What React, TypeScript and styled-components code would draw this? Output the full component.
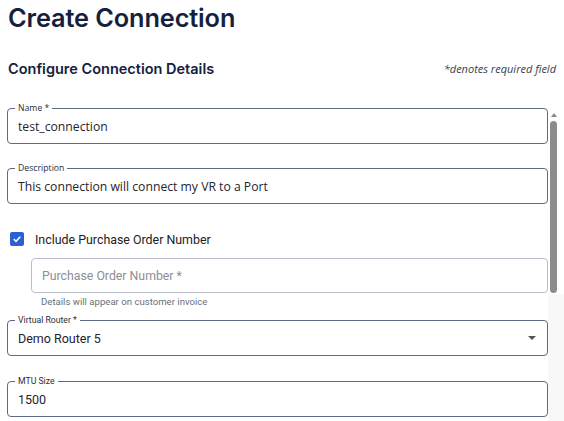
import styled, { createGlobalStyle } from 'styled-components';

const GlobalStyle = createGlobalStyle`
  html, body {
    margin: 0;
    padding: 0;
    background: #ffffff;
  }
  body {
    font-family: Roboto, "Liberation Sans", sans-serif;
    color: #222;
  }
`;

const Page = styled.div`
  width: 564px;
  height: 421px;
  overflow: hidden;
  display: flex;
  flex-direction: column;
`;

const Header = styled.div`
  padding: 0 8px 0 8px;
`;

const Title = styled.h1`
  margin: 0;
  padding-top: 1px;
  font-family: Inter, "Noto Sans", sans-serif;
  font-weight: 600;
  font-size: 25.3px;
  line-height: 34px;
  color: #14213d;
  letter-spacing: -0.1px;
`;

const SubRow = styled.div`
  display: flex;
  align-items: center;
  justify-content: space-between;
  margin-top: 23px;
  height: 20px;
`;

const SubTitle = styled.h2`
  margin: 0;
  font-family: Inter, "Noto Sans", sans-serif;
  font-weight: 600;
  font-size: 14.5px;
  color: #14213d;
`;

const RequiredNote = styled.span`
  font-family: "Open Sans", sans-serif;
  font-style: italic;
  font-size: 11px;
  color: #3a3f4a;
`;

const Body = styled.div`
  display: flex;
  flex: 1;
  margin-top: 25px;
`;

const Form = styled.div`
  width: 541px;
  padding-left: 7px;
  display: flex;
  flex-direction: column;
`;

const Fieldset = styled.fieldset<{ $top: number }>`
  margin: ${(p) => p.$top}px 0 0 0;
  padding: 0 10px 5px 10px;
  border: 1px solid #5b6b82;
  border-radius: 4px;
  min-width: 0;
`;

const Legend = styled.legend<{ $font?: string }>`
  padding: 0 3px;
  margin-left: -3px;
  font-family: ${(p) => p.$font ?? 'Roboto, sans-serif'};
  font-size: 8.7px;
  line-height: 11px;
  color: #2a2f38;
`;

const Value = styled.div<{ $font?: string; $size?: number }>`
  display: flex;
  align-items: center;
  justify-content: space-between;
  height: 24px;
  font-family: ${(p) => p.$font ?? 'Roboto, sans-serif'};
  font-size: ${(p) => p.$size ?? 12.5}px;
  color: #1f2430;
`;

const CheckRow = styled.label`
  display: flex;
  align-items: center;
  gap: 11px;
  margin-top: 27px;
  padding-left: 3px;
  height: 16px;
  font-family: Roboto, sans-serif;
  font-size: 12.4px;
  color: #222;
`;

const CheckBox = styled.span`
  width: 14px;
  height: 14px;
  border-radius: 2px;
  background: #2c5fd4;
  display: flex;
  align-items: center;
  justify-content: center;
`;

const Nested = styled.div`
  margin-left: 24px;
  margin-top: 11px;
  display: flex;
  flex-direction: column;
`;

const PlainBox = styled.div`
  height: 33px;
  border: 1px solid #b9c0cb;
  border-radius: 4px;
  display: flex;
  align-items: center;
  padding-left: 10px;
  font-family: Roboto, sans-serif;
  font-size: 12.3px;
  color: #8a8f98;
`;

const Helper = styled.div`
  margin-top: 3px;
  padding-left: 10px;
  font-family: Roboto, sans-serif;
  font-size: 9.6px;
  line-height: 12px;
  color: #6b7079;
`;

const Caret = styled.span`
  width: 0;
  height: 0;
  margin-right: 1px;
  border-left: 4px solid transparent;
  border-right: 4px solid transparent;
  border-top: 4px solid #555;
`;

const Scrollbar = styled.div`
  width: 16px;
  margin-left: 0;
  display: flex;
  flex-direction: column;
  align-items: center;
  background: linear-gradient(#ffffff 0, #ffffff 191px, #f8f8f8 191px);
  padding-top: 10px;
`;

const ArrowUp = styled.span`
  width: 0;
  height: 0;
  margin-right: 5px;
  border-left: 3px solid transparent;
  border-right: 3px solid transparent;
  border-bottom: 4px solid #8a8a8a;
`;

const Thumb = styled.div`
  width: 7px;
  height: 172px;
  margin-top: 4px;
  margin-right: 5px;
  border-radius: 4px;
  background: #8c8c8c;
`;

const App = () => {
  return (
    <Page>
      <GlobalStyle />
      <Header>
        <Title>Create Connection</Title>
        <SubRow>
          <SubTitle>Configure Connection Details</SubTitle>
          <RequiredNote>*denotes required field</RequiredNote>
        </SubRow>
      </Header>
      <Body>
        <Form>
          <Fieldset $top={0}>
            <Legend $font='"Open Sans", sans-serif'>Name *</Legend>
            <Value $font='"Open Sans", sans-serif' $size={12.2}>test_connection</Value>
          </Fieldset>
          <Fieldset $top={19}>
            <Legend $font='"Open Sans", sans-serif'>Description</Legend>
            <Value $font='"Open Sans", sans-serif' $size={12.2}>This connection will connect my VR to a Port</Value>
          </Fieldset>
          <CheckRow>
            <CheckBox>
              <svg width="10" height="10" viewBox="0 0 10 10">
                <path d="M1.8 5.2 L4 7.3 L8.3 2.8" fill="none" stroke="#fff" strokeWidth="1.6" />
              </svg>
            </CheckBox>
            Include Purchase Order Number
          </CheckRow>
          <Nested>
            <PlainBox>Purchase Order Number *</PlainBox>
            <Helper>Details will appear on customer invoice</Helper>
          </Nested>
          <Fieldset $top={7}>
            <Legend>Virtual Router *</Legend>
            <Value>
              Demo Router 5
              <Caret />
            </Value>
          </Fieldset>
          <Fieldset $top={20}>
            <Legend>MTU Size</Legend>
            <Value>1500</Value>
          </Fieldset>
        </Form>
        <Scrollbar>
          <ArrowUp />
          <Thumb />
        </Scrollbar>
      </Body>
    </Page>
  );
};

export default App;
